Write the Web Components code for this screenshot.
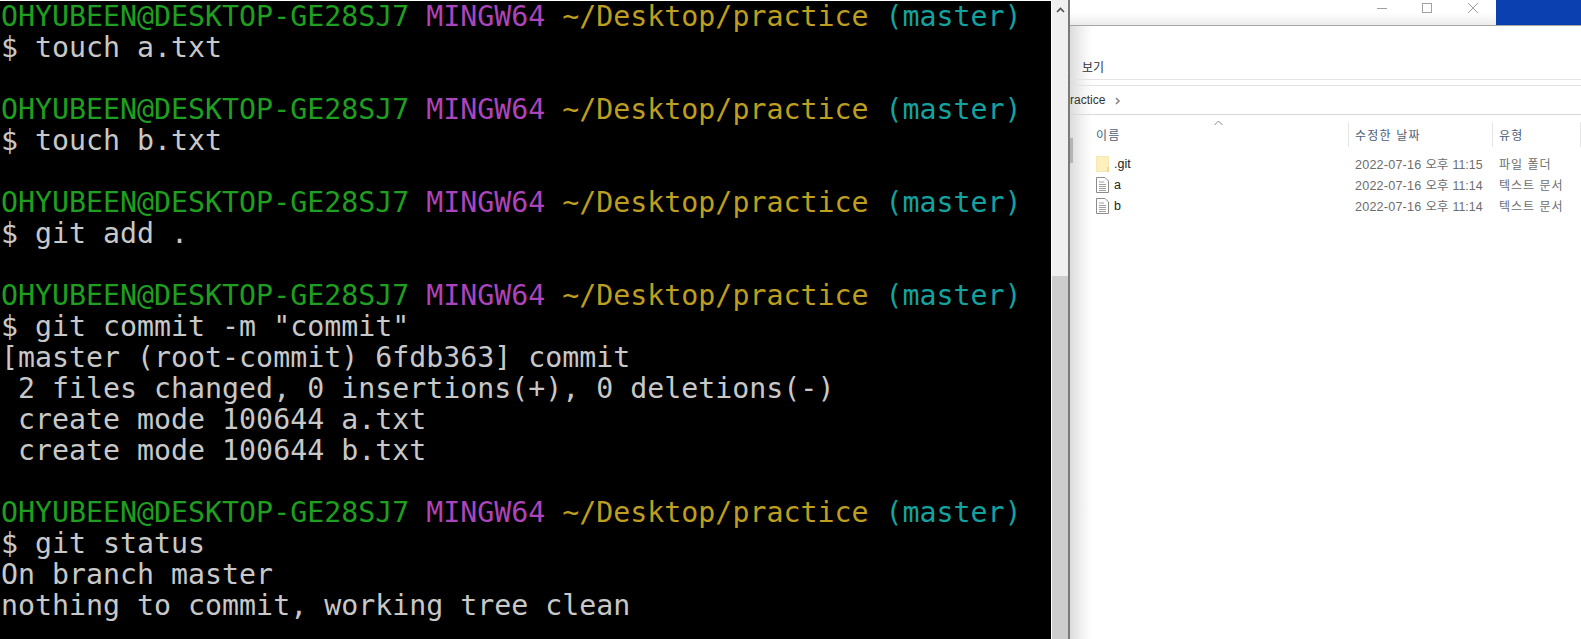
<!DOCTYPE html>
<html><head><meta charset="utf-8"><title>Git Bash and Explorer</title>
<style>html,body{margin:0;padding:0;height:100%;overflow:hidden;background:#fff}</style></head>
<body>
<desktop-shot>
<git-terminal>
<prompt-line></prompt-line><term-line>$ touch a.txt</term-line><term-line></term-line>
<prompt-line></prompt-line><term-line>$ touch b.txt</term-line><term-line></term-line>
<prompt-line></prompt-line><term-line>$ git add .</term-line><term-line></term-line>
<prompt-line></prompt-line><term-line>$ git commit -m "commit"</term-line>
<term-line>[master (root-commit) 6fdb363] commit</term-line>
<term-line> 2 files changed, 0 insertions(+), 0 deletions(-)</term-line>
<term-line> create mode 100644 a.txt</term-line>
<term-line> create mode 100644 b.txt</term-line><term-line></term-line>
<prompt-line></prompt-line><term-line>$ git status</term-line>
<term-line>On branch master</term-line>
<term-line>nothing to commit, working tree clean</term-line>
</git-terminal>
<term-scrollbar></term-scrollbar>
<explorer-window>
<file-row kind="folder" name=".git" day="2022-07-16" ampm="오후" time="11:15" type="파일 폴더"></file-row>
<file-row kind="text" name="a" day="2022-07-16" ampm="오후" time="11:14" type="텍스트 문서"></file-row>
<file-row kind="text" name="b" day="2022-07-16" ampm="오후" time="11:14" type="텍스트 문서"></file-row>
</explorer-window>
</desktop-shot>
<script>
function def(name, html, init){
  customElements.define(name, class extends HTMLElement{
    constructor(){super();this.attachShadow({mode:'open'}).innerHTML=html;}
    connectedCallback(){ if(init) init(this); }
  });
}
def('desktop-shot',`<style>:host{display:flex;width:1581px;height:639px;overflow:hidden;background:#fff}</style><slot></slot>`);
def('git-terminal',`<style>:host{display:block;flex:none;width:1051px;height:638px;margin-top:1px;background:#000;overflow:hidden;color:#c8c8c8;
font:28.25px/31px "DejaVu Sans Mono",monospace;}</style><slot></slot>`);
def('term-line',`<style>:host{display:block;height:31px;white-space:pre;padding-left:1px}</style><slot></slot>`);
def('prompt-line',`<style>:host{display:block;height:31px;white-space:pre;padding-left:1px}
.g{color:#1f9f1f}.m{color:#ac44bc}.y{color:#bd9e1e}.c{color:#14a29f}</style><span class="g">OHYUBEEN@DESKTOP-GE28SJ7</span> <span class="m">MINGW64</span> <span class="y">~/Desktop/practice</span> <span class="c">(master)</span>`);
def('term-scrollbar',`<style>:host{display:flex;flex-direction:column;flex:none;width:16px;height:639px;margin-left:1px;background:#f0f0f0}
.btn{height:20px;display:flex;align-items:center;justify-content:center}
.track{flex:none;height:256px}
.thumb{flex:1;background:#cdcdcd}</style>
<div class="btn"><svg width="9" height="6" viewBox="0 0 9 6"><path d="M1 5 L4.5 1.5 L8 5" fill="none" stroke="#505050" stroke-width="1.6"/></svg></div>
<div class="track"></div><div class="thumb"></div>`);
def('explorer-window',`<style>:host{display:block;flex:1;min-width:0;height:639px;position:relative;font:12px "Liberation Sans","Noto Sans CJK KR",sans-serif;color:#333;
border-left:2px solid #7a7a7a;box-sizing:border-box;background:linear-gradient(90deg,#dcdcdc,#f1f1f1 12px,#fff 22px) no-repeat 0 0/24px 100%,#fff}
.title{height:25px;border-bottom:1px solid #a5a5a5;display:flex;justify-content:flex-end;background:linear-gradient(#fff 50%,#ececec)}
.ctrls{display:flex;align-items:center;gap:34px;padding-right:17px;height:16px}
.blue{width:85px;height:25px;background:#0a40b0}
.menu{height:54px;display:flex;align-items:flex-end;padding-left:12px;box-sizing:border-box;border-bottom:1px solid #e3e3e3}
.menu span{margin-bottom:4px;font-size:12px}
.gap{height:5px;border-bottom:1px solid #e3e3e3}
.crumb{height:28px;border-bottom:1px solid #d9d9d9;display:flex;align-items:center;gap:10px;overflow:hidden;color:#333}
.crumb span{font-size:12px}
.crumb svg{margin-top:1px}
.head{display:grid;grid-template-columns:279px 144px 1fr;height:38px;align-items:center;position:relative;color:#4c607a;font-size:12px;letter-spacing:1.2px}
.head div{height:25px;display:flex;align-items:center;padding-left:6px;border-right:1px solid #e5e5e5;box-sizing:border-box}
.head div:first-child{padding-left:26px}
.head div:last-child{border:0}
.head::before{content:"";position:absolute;left:6px;top:5px;height:30px;width:1px;background:#e8e8e8}
.strip{position:absolute;left:0;top:138px;width:3px;height:25px;background:#b4b4b4}
.sort{position:absolute;left:144px;top:5px}
</style>
<div class="title"><div class="ctrls">
<svg width="12" height="12" viewBox="0 0 12 12"><path d="M1 6.5H11" stroke="#a0a0a0" fill="none"/></svg>
<svg width="11" height="11" viewBox="0 0 11 11"><rect x=".5" y=".5" width="9" height="9" fill="none" stroke="#a0a0a0"/></svg>
<svg width="12" height="12" viewBox="0 0 12 12"><path d="M1 1L11 11M11 1L1 11" stroke="#a0a0a0" fill="none"/></svg>
</div><div class="blue"></div></div>
<div class="menu"><span>보기</span></div>
<div class="gap"></div>
<div class="crumb"><span>ractice</span><svg width="6" height="8" viewBox="0 0 6 8"><path d="M1 1L4 4L1 7" fill="none" stroke="#888" stroke-width="1.6"/></svg></div>
<div class="head"><div>이름</div><div>수정한 날짜</div><div>유형</div>
<svg class="sort" width="9" height="6" viewBox="0 0 9 6"><path d="M.5 5L4.5 1L8.5 5" fill="none" stroke="#8a8a8a"/></svg></div>
<div class="strip"></div>
<slot></slot>`);
def('file-row',`<style>:host{display:grid;grid-template-columns:279px 144px 1fr;height:21px;align-items:center;white-space:nowrap}
.n{display:flex;align-items:center;gap:5px;padding-left:26px;color:#222;font-size:12.5px}
.d,.t{padding-left:6px;color:#6d6d6d}
.d{display:flex;gap:4px;align-items:baseline}
#dy{font-size:12.6px;letter-spacing:.2px}
#tm{font-size:12.4px}
.t,.k{font-size:12px;letter-spacing:1px}
#ap{letter-spacing:0;font-size:12.5px}
svg{flex:none}</style>
<div class="n"><span id="ic" style="display:flex"></span><span id="nm"></span></div><div class="d"><span id="dy"></span><span class="k" id="ap"></span><span id="tm"></span></div><div class="t" id="tp"></div>`, el=>{
  const s=el.shadowRoot, k=el.getAttribute('kind');
  const set=(i,a)=>s.getElementById(i).textContent=el.getAttribute(a);
  set('nm','name');set('dy','day');set('ap','ampm');set('tm','time');set('tp','type');
  s.getElementById('ic').innerHTML = k==='folder'
   ? `<svg width="13" height="16" viewBox="0 0 13 16"><path d="M.5 .5H12.5V15.5H.5Z" fill="#fdf0bd" stroke="#f5e8b4"/><path d="M11 11H13V16H11Z" fill="#ecd996"/></svg>`
   : `<svg width="13" height="16" viewBox="0 0 13 16"><path d="M.5 .5H9L12.5 4V15.5H.5Z" fill="#fff" stroke="#8c8c8c"/><path d="M3 5H8M3 7.5H10M3 9.5H10M3 11.5H10M3 13.5H10" stroke="#a0a0a0"/></svg>`;
});
</script>
</body></html>
